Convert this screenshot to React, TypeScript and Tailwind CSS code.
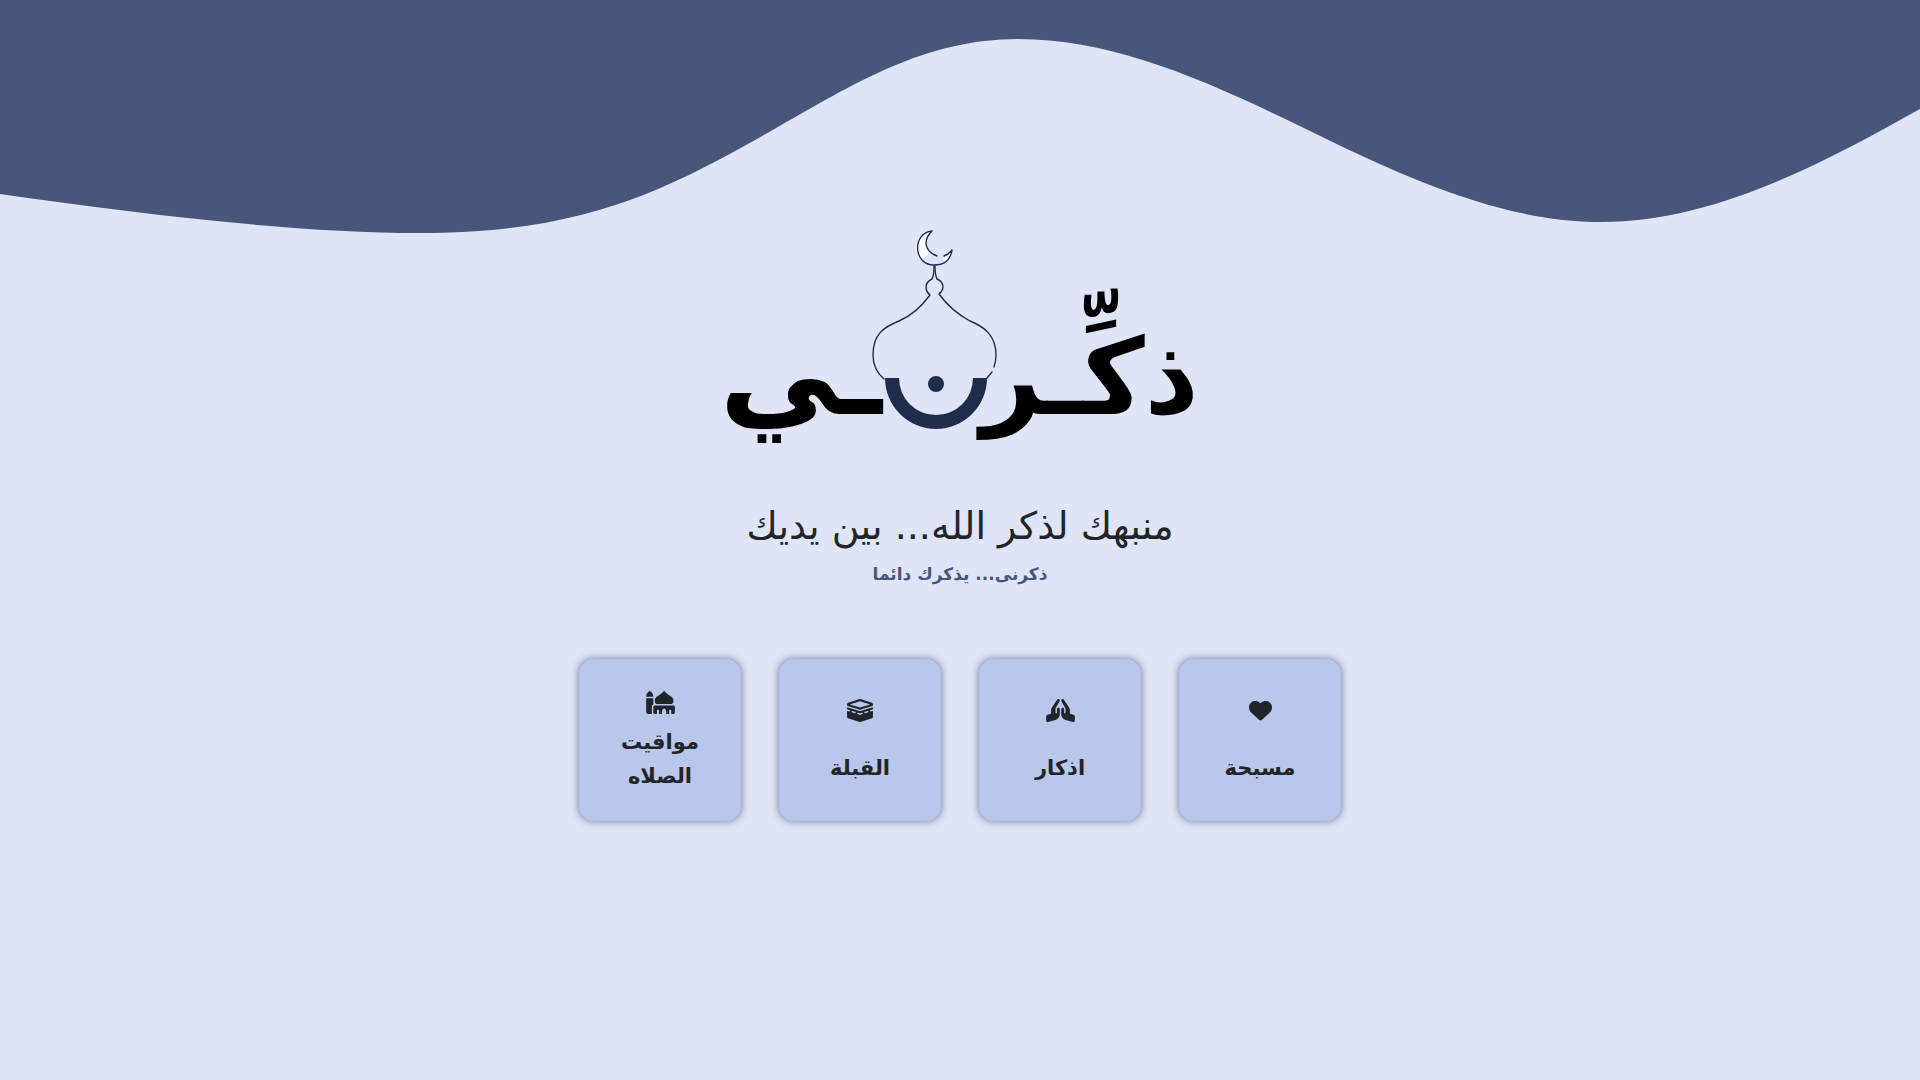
import { FaHeart, FaHandsPraying, FaKaaba, FaMosque } from 'react-icons/fa6';
import type { IconType } from 'react-icons';

const links: { label: string; href: string; Icon: IconType; width: string }[] = [
  { label: 'مسبحة', href: '#tasbih', Icon: FaHeart, width: 'w-[23px]' },
  { label: 'اذكار', href: '#azkar', Icon: FaHandsPraying, width: 'w-[29px]' },
  { label: 'القبلة', href: '#qibla', Icon: FaKaaba, width: 'w-[26px]' },
  { label: 'مواقيت الصلاه', href: '#prayer-times', Icon: FaMosque, width: 'w-[29px]' },
];

function Wave() {
  return (
    <svg viewBox="0 0 1920 240" preserveAspectRatio="none" className="block h-60 w-full" aria-hidden="true">
      <path
        fill="#485679"
        d="M0 0V194C140 214 295 233 420 233C583 233 665 191 771 131C855 83 925 39 1018 39C1115 39 1210 82 1310 131C1410 180 1505 222 1601 222C1715 222 1825 162 1920 109V0Z"
      />
    </svg>
  );
}

function Logo() {
  return (
    <svg viewBox="720 220 480 250" className="block w-[480px] max-w-full" role="img" aria-label="ذكِّرني">
      <g fill="#000" fontFamily="'DejaVu Sans', sans-serif" fontWeight="700">
        <text x="1199" y="414" direction="rtl" fontSize="106">ذكِّـر</text>
        <text x="882" y="414" direction="rtl" fontSize="120">ـي</text>
      </g>
      <path fill="#1f2d4d" d="M885 378H899A37 37 0 0 0 973 378H987A51 51 0 0 1 885 378Z" />
      <circle cx="936" cy="384" r="8" fill="#1f2d4d" />
      <path fill="#fff" d="M931 231C914 234 913 252 921 260L929 254C924 245 925 238 931 231ZM943 259L951 251C951 256 948 260 944 262Z" />
      <g fill="none" stroke="#1f2d4d" strokeWidth="1.4" strokeLinejoin="round" strokeLinecap="round">
        <path d="M937 256C924 251 923 240 932 231C912 233 913 265 934 265C945 265 951 259 952 250L948 254L944 256" />
        <path d="M934 266Q934 275 932 279C925 282 924 290 930 295C922 306 913 315 899 321C884 327 873 334 873 355C873 366 877 373 884 379" />
        <path d="M935 266Q935 275 937 279C944 282 945 289 939 294C947 305 957 314 970 321C985 327 996 336 996 355Q996 361 994 367M992 372L987 378" />
      </g>
    </svg>
  );
}

export default function App() {
  return (
    <main dir="rtl" className="min-h-screen bg-[#dfe4f6] font-['DejaVu_Sans',sans-serif] text-[#212529]">
      <Wave />
      <section className="-mt-5 flex flex-col items-center px-6">
        <Logo />
        <h1 className="mt-8 text-center text-[38px] leading-12">منبهك لذكر الله... بين يديك</h1>
        <p className="mt-3 text-center text-[17px] leading-6 font-bold text-[#485679]">ذكرنى... يذكرك دائما</p>
        <nav className="mt-18 flex flex-wrap justify-center gap-9">
          {links.map(({ label, href, Icon, width }) => (
            <a
              key={href}
              href={href}
              className="flex size-41 flex-col items-center justify-around rounded-2xl border border-[#a5b2d3] bg-[#b9c7ea] px-6 pt-[26px] pb-[22px] text-center text-[21px] leading-[34px] font-bold shadow-[0_0_7px_#48567999]"
            >
              <Icon className={`h-[23px] ${width}`} />
              {label}
            </a>
          ))}
        </nav>
      </section>
    </main>
  );
}
